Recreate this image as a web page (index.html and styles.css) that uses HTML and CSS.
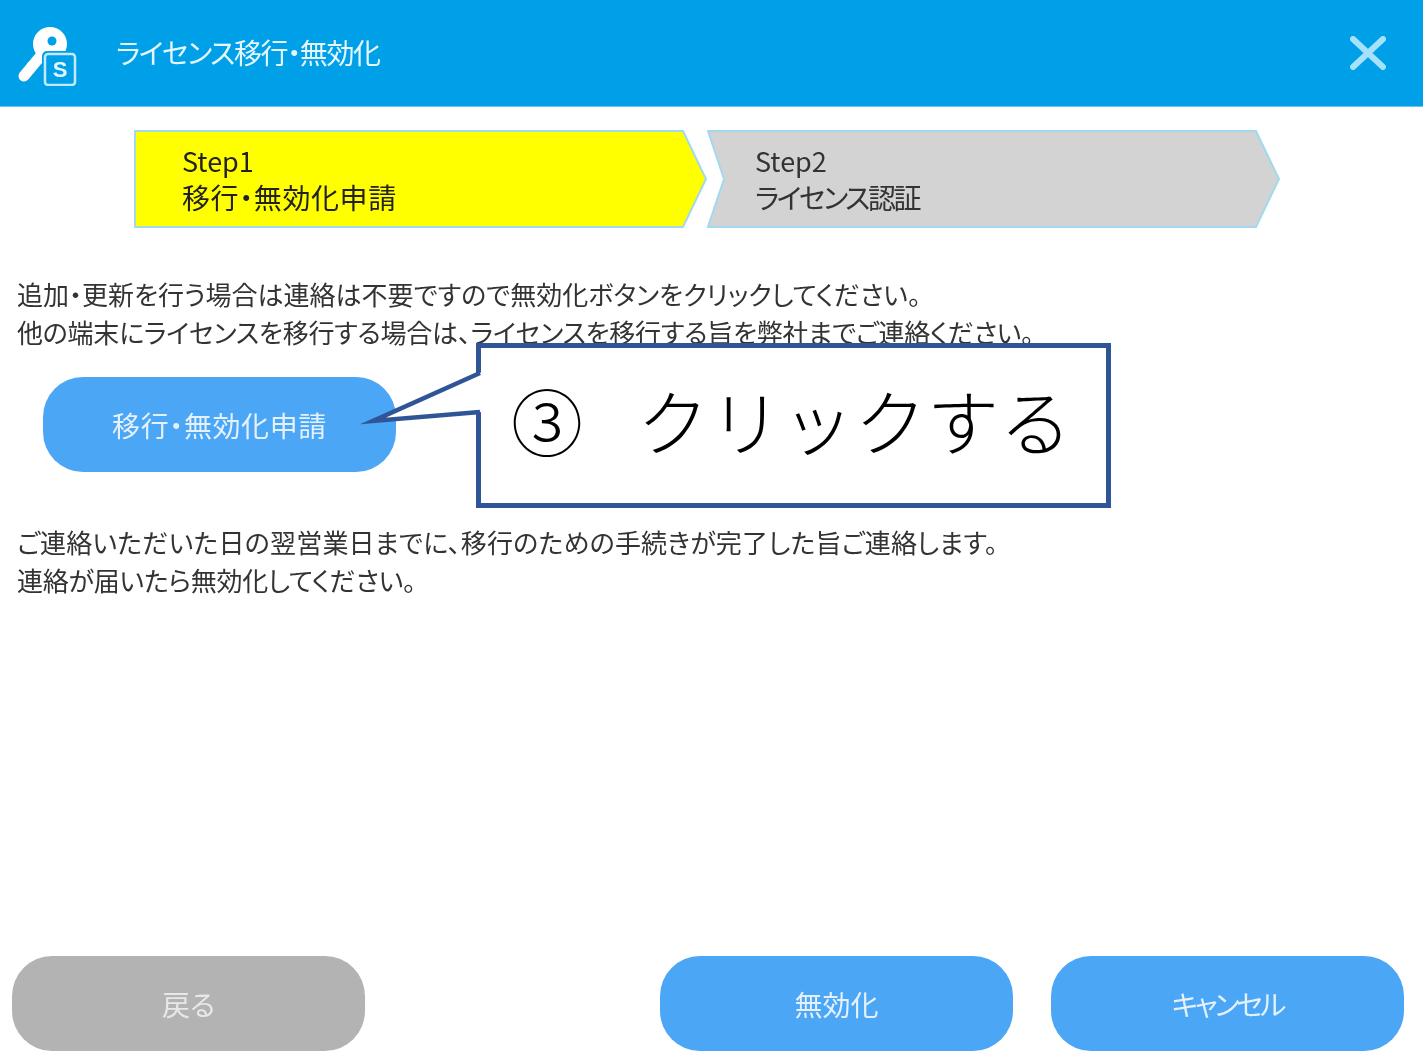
FILE: index.html
```html
<!DOCTYPE html>
<html lang="ja">

<head>
  <meta charset="utf-8">
  <title>ライセンス移行・無効化</title>
  <link rel="stylesheet" href="styles.css">
</head>

<body>
  <div class="window">
    <div class="titlebar">
      <svg class="appicon" width="62" height="62" viewBox="0 0 62 62">
        <!-- key -->
        <circle cx="33" cy="20" r="17" fill="#fff"/>
        <path d="M27 28L7 52" stroke="#fff" stroke-width="11" stroke-linecap="round" fill="none"/>
        <path d="M13 45l-3-6 6-2z" fill="#fff"/>
        <circle cx="35" cy="17" r="4.5" fill="#00a0e9"/>
        <!-- S box -->
        <rect x="25" y="27" width="36" height="36" rx="5" fill="#00a0e9"/>
        <rect x="28" y="30" width="30" height="31" rx="3" fill="#00a0e9" stroke="#c4eafa" stroke-width="2.5"/>
        <text x="43" y="53" class="appicon-s">S</text>
      </svg>
      <div class="title">ライセンス移行・無効化</div>
      <svg class="close" width="36" height="34" viewBox="0 0 36 34">
        <path d="M3 3L33 31M33 3L3 31" stroke="#a6e1fb" stroke-width="6" stroke-linecap="round" fill="none"/>
      </svg>
    </div>

    <div class="steps">
      <div class="step step-on">
        <svg class="step-bg" width="574" height="98" viewBox="0 0 574 98">
          <polygon points="1,1 549,1 572,49 549,97 1,97" fill="#ffff00" stroke="#a3d9ee" stroke-width="2"/>
        </svg>
        <div class="step-text">Step1<br><span class="step-name">移行・無効化申請</span></div>
      </div>
      <div class="step step-off">
        <svg class="step-bg" width="574" height="98" viewBox="0 0 574 98">
          <polygon points="1,1 549,1 572,49 549,97 1,97 17,49" fill="#d3d3d3" stroke="#a3d9ee" stroke-width="2"/>
        </svg>
        <div class="step-text">Step2<br><span class="step-name">ライセンス認証</span></div>
      </div>
    </div>

    <div class="content">
      <p class="message">追加・更新を行う場合は連絡は不要ですので無効化ボタンをクリックしてください。<br><span class="tight">他の端末にライセンスを移行する場合は、ライセンスを移行する旨を弊社までご連絡ください。</span></p>
      <div class="btn btn-apply">移行・無効化申請</div>
      <p class="message"><span class="loose">ご連絡いただいた日の翌営業日までに、移行のための手続きが完了した旨ご連絡します。</span><br><span class="tight">連絡が届いたら無効化してください。</span></p>
    </div>

    <div class="footer">
      <div class="btn btn-gray">戻る</div>
      <div class="footer-right">
        <div class="btn">無効化</div>
        <div class="btn btn-cancel">キャンセル</div>
      </div>
    </div>

    <!-- callout drawn over the dialog -->
    <div class="callout">
      <svg class="callout-tail" width="130" height="90" viewBox="0 0 130 90">
        <polygon points="124,8 15,57 124,48" fill="#fff"/>
        <polyline points="122,9 15,57 122,48" fill="none" stroke="#2f5597" stroke-width="4.5" stroke-miterlimit="12"/>
      </svg>
      <div class="callout-text">③ クリックする</div>
    </div>
  </div>
</body>

</html>
```

FILE: styles.css
```css
html, body {
  margin: 0;
  padding: 0;
  background-color: #fff;
}

.window {
  position: relative;
  width: 1423px;
  height: 1063px;
  display: flex;
  flex-direction: column;
  overflow: hidden;
  font-family: "Noto Sans CJK JP", "Noto Sans", sans-serif;
  font-feature-settings: "palt";
  color: #333;
}

/* the dialog underneath the callout is a slightly soft screenshot */
.titlebar, .steps, .content, .footer {
  filter: blur(0.5px);
}

.titlebar {
  height: 107px;
  flex: none;
  display: flex;
  align-items: center;
  background-color: #00a0e9;
  border-bottom: 1px solid #6cc5f0;
  color: #e6f6fd;
  box-sizing: border-box;
  padding: 0 37px 0 17px;
}

.appicon {
  flex: none;
  margin-top: 3px;
}

.appicon-s {
  font-family: "Liberation Sans", sans-serif;
  font-size: 22px;
  font-weight: bold;
  fill: #e6f6fd;
  text-anchor: middle;
}

.title {
  flex: 1;
  margin-left: 37px;
  margin-top: -3px;
  font-size: 28px;
  letter-spacing: -1.4px;
}

.close {
  flex: none;
}

.steps {
  display: flex;
  margin: 23px 0 0 134px;
  height: 98px;
  flex: none;
}

.step {
  position: relative;
  width: 573px;
  height: 98px;
}

.step-bg {
  position: absolute;
  left: 0;
  top: 0;
}

.step-text {
  position: relative;
  padding: 12px 0 0 48px;
  font-size: 27px;
  line-height: 37px;
}

.step-name {
  font-size: 28px;
  letter-spacing: 0.6px;
}

.step-on .step-text {
  color: #222;
}

.step-off .step-name {
  letter-spacing: -2.4px;
}

.content {
  flex: 1;
  padding: 47px 17px 0;
}

.message {
  margin: 0;
  font-size: 26px;
  line-height: 38px;
  white-space: nowrap;
}

.tight {
  letter-spacing: -0.23px;
}

.loose {
  letter-spacing: 0.2px;
}

.btn {
  width: 353px;
  height: 95px;
  border-radius: 40px;
  display: flex;
  align-items: center;
  justify-content: center;
  background-color: #4ba6f5;
  color: #e4f1fd;
  font-size: 28px;
  flex: none;
}

.btn-apply {
  margin: 26px 0 51px 26px;
  letter-spacing: 0.6px;
}

.btn-gray {
  background-color: #b3b3b3;
  color: #e8e8e8;
}

.btn-cancel {
  letter-spacing: -3px;
}

.footer {
  flex: none;
  display: flex;
  justify-content: space-between;
  padding: 0 19px 12px 12px;
}

.footer-right {
  display: flex;
  gap: 38px;
}

.callout {
  position: absolute;
  left: 476px;
  top: 343px;
  width: 635px;
  height: 165px;
  box-sizing: border-box;
  border: 5px solid #2f5597;
  background-color: #fff;
  display: flex;
  align-items: center;
}

.callout-tail {
  position: absolute;
  left: -123px;
  top: 16px;
}

.callout-text {
  padding: 0 0 14px 30px;
  font-size: 72px;
  font-weight: 300;
  font-feature-settings: normal;
  color: #000;
  white-space: pre;
  letter-spacing: 0.5px;
  word-spacing: 37px;
}
```
